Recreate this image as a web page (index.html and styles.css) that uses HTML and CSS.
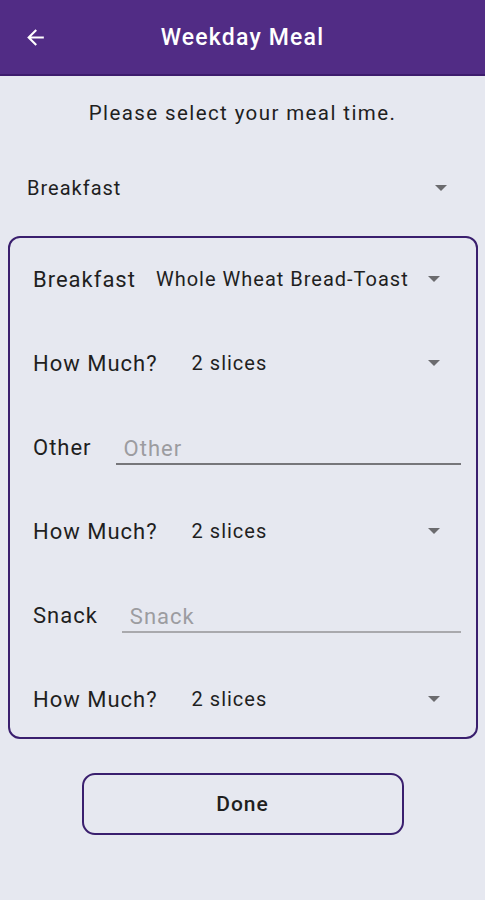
FILE: index.html
```html
<!doctype html>
<html lang="en">
    <head>
        <meta charset="UTF-8" />
        <meta name="viewport" content="width=device-width, initial-scale=1.0" />
        <title>Weekday Meal</title>
        <link rel="stylesheet" href="styles.css">
    </head>
    <body>
        <!-- Top app bar -->
        <header class="app-bar">
            <svg class="back" viewBox="0 0 24 24" width="24" height="24">
                <path d="M20 11H7.83l5.59-5.59L12 4l-8 8 8 8 1.41-1.41L7.83 13H20v-2z" fill="#fff" />
            </svg>
            <h1>Weekday Meal</h1>
        </header>

        <main class="content">
            <p class="prompt">Please select your meal time.</p>

            <div class="meal-select">
                <span>Breakfast</span>
                <span class="caret"></span>
            </div>

            <section class="card">
                <div class="row">
                    <span class="label">Breakfast</span>
                    <span class="value food">Whole Wheat Bread-Toast</span>
                    <span class="caret"></span>
                </div>
                <div class="row">
                    <span class="label">How Much?</span>
                    <span class="value qty">2 slices</span>
                    <span class="caret"></span>
                </div>
                <div class="row">
                    <span class="label">Other</span>
                    <span class="field other">Other</span>
                </div>
                <div class="row">
                    <span class="label">How Much?</span>
                    <span class="value qty">2 slices</span>
                    <span class="caret"></span>
                </div>
                <div class="row">
                    <span class="label">Snack</span>
                    <span class="field snack">Snack</span>
                </div>
                <div class="row">
                    <span class="label">How Much?</span>
                    <span class="value qty">2 slices</span>
                    <span class="caret"></span>
                </div>
            </section>

            <button class="done">Done</button>
        </main>
    </body>
</html>
```
FILE: styles.css
```css
:root {
    --purple: #512c85;
    --purple-dark: #3a1f6e;
    --bg: #e6e8f0;
    --text: #1f1f1f;
    --muted: #9c9ca0;
    --caret: #6b6b6e;
}

* {
    box-sizing: border-box;
}

body {
    margin: 0;
    font-family: Roboto, "Noto Sans", sans-serif;
    background-color: var(--bg);
    color: var(--text);
    min-height: 100vh;
}

.app-bar {
    height: 76px;
    background-color: var(--purple);
    border-bottom: 2px solid #3d1c6d;
    display: flex;
    align-items: center;
    padding-left: 23px;
}
.back {
    width: 25px;
    height: 25px;
}
.app-bar h1 {
    flex: 1;
    margin: 0 0 0 -48px;
    text-align: center;
    color: #fff;
    font-size: 23px;
    font-weight: 500;
    letter-spacing: 1.2px;
}

.content {
    display: flex;
    flex-direction: column;
    align-items: center;
}
.prompt {
    margin: 22px 0 0;
    font-size: 20.5px;
    line-height: 30px;
    color: var(--text);
    letter-spacing: 1.4px;
}

.meal-select {
    align-self: stretch;
    display: flex;
    align-items: center;
    justify-content: space-between;
    margin: 48px 38px 0 27px;
    font-size: 20px;
    line-height: 24px;
    letter-spacing: 1px;
}

.caret {
    width: 0;
    height: 0;
    border-left: 6px solid transparent;
    border-right: 6px solid transparent;
    border-top: 6px solid var(--caret);
}

.card {
    align-self: stretch;
    margin: 36px 7px 0 8px;
    border: 2px solid var(--purple-dark);
    border-radius: 12px;
    padding: 26px 0 23px 0;
    display: flex;
    flex-direction: column;
    gap: 54px;
}
.row {
    display: flex;
    align-items: center;
    height: 30px;
    padding: 0 36px 0 23px;
    font-size: 22px;
    letter-spacing: 1px;
}
.row .label {
    color: var(--text);
}
.row .value {
    flex: 1;
    font-size: 20px;
    color: var(--text);
}
.row .food {
    margin-left: 20px;
}
.row .qty {
    margin-left: 34px;
}
.row .field {
    flex: 1;
    align-self: stretch;
    display: flex;
    align-items: center;
    color: var(--muted);
    padding: 2px 0 0 8px;
    border-bottom: 2px solid #76767a;
    margin: 0 -21px -3px 0;
}
.row .other {
    margin-left: 24px;
}
.row .snack {
    margin-left: 24px;
    border-bottom-color: #a9a9ad;
}

.done {
    margin-top: 34px;
    width: 322px;
    height: 62px;
    background: transparent;
    border: 2px solid var(--purple-dark);
    border-radius: 13px;
    font-family: Roboto, "Noto Sans", sans-serif;
    font-size: 21px;
    font-weight: 500;
    letter-spacing: 1px;
    color: var(--text);
}
```
